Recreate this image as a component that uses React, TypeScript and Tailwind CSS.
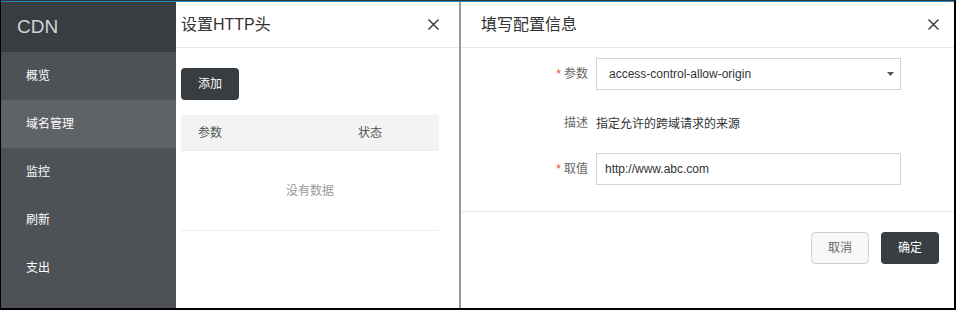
import type { ReactNode } from "react";

const menuItems = ["概览", "域名管理", "监控", "刷新", "支出"];

function CloseIcon() {
  return (
    <svg width="11" height="11" viewBox="0 0 11 11" className="text-[#333]">
      <path
        d="M0.5 0.5L10.5 10.5M10.5 0.5L0.5 10.5"
        stroke="currentColor"
        strokeWidth="1.4"
        fill="none"
      />
    </svg>
  );
}

function FormRow({
  label,
  required,
  children,
  className = "",
}: {
  label: string;
  required?: boolean;
  children: ReactNode;
  className?: string;
}) {
  return (
    <div className={`flex h-8 items-center ${className}`}>
      <div className="w-[127px] text-right text-xs text-[#666]">
        {required && <span className="mr-[3px] text-[#e84c3d]">*</span>}
        {label}
      </div>
      <div className="ml-2">{children}</div>
    </div>
  );
}

export default function App() {
  return (
    <div className="flex h-[310px] w-[956px] flex-col border-t border-r-2 border-b-2 border-l border-t-[#333] border-r-black border-b-black border-l-black [font-family:'Liberation_Sans','Noto_Sans_CJK_SC',sans-serif]">
      <div className="h-px bg-[#1f8ac6]" />
      <div className="flex min-h-0 flex-1">
        {/* sidebar */}
        <aside className="flex w-[175px] flex-col bg-[#4e5257]">
          <div className="flex h-[50px] items-center bg-[#373d41] pl-4 text-[19px] text-[#d3d3d3]">
            CDN
          </div>
          {menuItems.map((item) => (
            <div
              key={item}
              className={`flex h-12 items-center pl-[25px] text-xs text-white ${
                item === "域名管理" ? "bg-[#5f6266]" : ""
              }`}
            >
              {item}
            </div>
          ))}
        </aside>

        {/* http header panel */}
        <section className="flex w-[283px] flex-col bg-white">
          <div className="flex h-[46px] items-center justify-between border-b border-[#e8e8e8] pl-[5px] pr-5">
            <span className="text-base text-[#333]">设置HTTP头</span>
            <CloseIcon />
          </div>
          <div className="pl-[5px] pr-5 pt-5">
            <button className="h-8 w-[58px] rounded-sm bg-[#373d41] text-xs text-white">
              添加
            </button>
            <div className="mt-[15px]">
              <div className="flex h-9 items-center border-b border-[#eee] bg-[#f2f3f3] text-xs text-[#555]">
                <div className="w-[160px] pl-[17px]">参数</div>
                <div className="pl-[17px]">状态</div>
              </div>
              <div className="flex h-[80px] items-center justify-center border-b border-[#eee] text-xs text-[#999]">
                没有数据
              </div>
            </div>
          </div>
        </section>

        {/* config drawer */}
        <section className="flex flex-1 flex-col border-l-2 border-[#999] bg-white">
          <div className="flex h-[46px] items-center justify-between border-b border-[#e8e8e8] pl-5 pr-[15px]">
            <span className="text-base text-[#333]">填写配置信息</span>
            <CloseIcon />
          </div>
          <div className="border-b border-[#e8e8e8] pb-[26px] pt-[10px]">
            <FormRow label="参数" required>
              <div className="flex h-8 w-[305px] items-center justify-between border border-[#d5d5d5] pl-3 pr-[6px] text-xs text-[#333]">
                <span>access-control-allow-origin</span>
                <svg width="7" height="4" viewBox="0 0 7 4">
                  <path d="M0 0H7L3.5 4Z" fill="#555" />
                </svg>
              </div>
            </FormRow>
            <FormRow label="描述" className="mt-[17px]">
              <span className="text-xs text-[#333]">指定允许的跨域请求的来源</span>
            </FormRow>
            <FormRow label="取值" required className="mt-[14px]">
              <div className="flex h-8 w-[305px] items-center border border-[#d5d5d5] pl-2 text-xs text-[#333]">
                http://www.abc.com
              </div>
            </FormRow>
          </div>
          <div className="flex justify-end gap-3 pr-[15px] pt-5">
            <button className="h-8 w-[58px] rounded-sm border border-[#d0d0d0] bg-[#f7f7f7] text-xs text-[#666]">
              取消
            </button>
            <button className="h-8 w-[58px] rounded-sm bg-[#373d41] text-xs text-white">
              确定
            </button>
          </div>
        </section>
      </div>
    </div>
  );
}
